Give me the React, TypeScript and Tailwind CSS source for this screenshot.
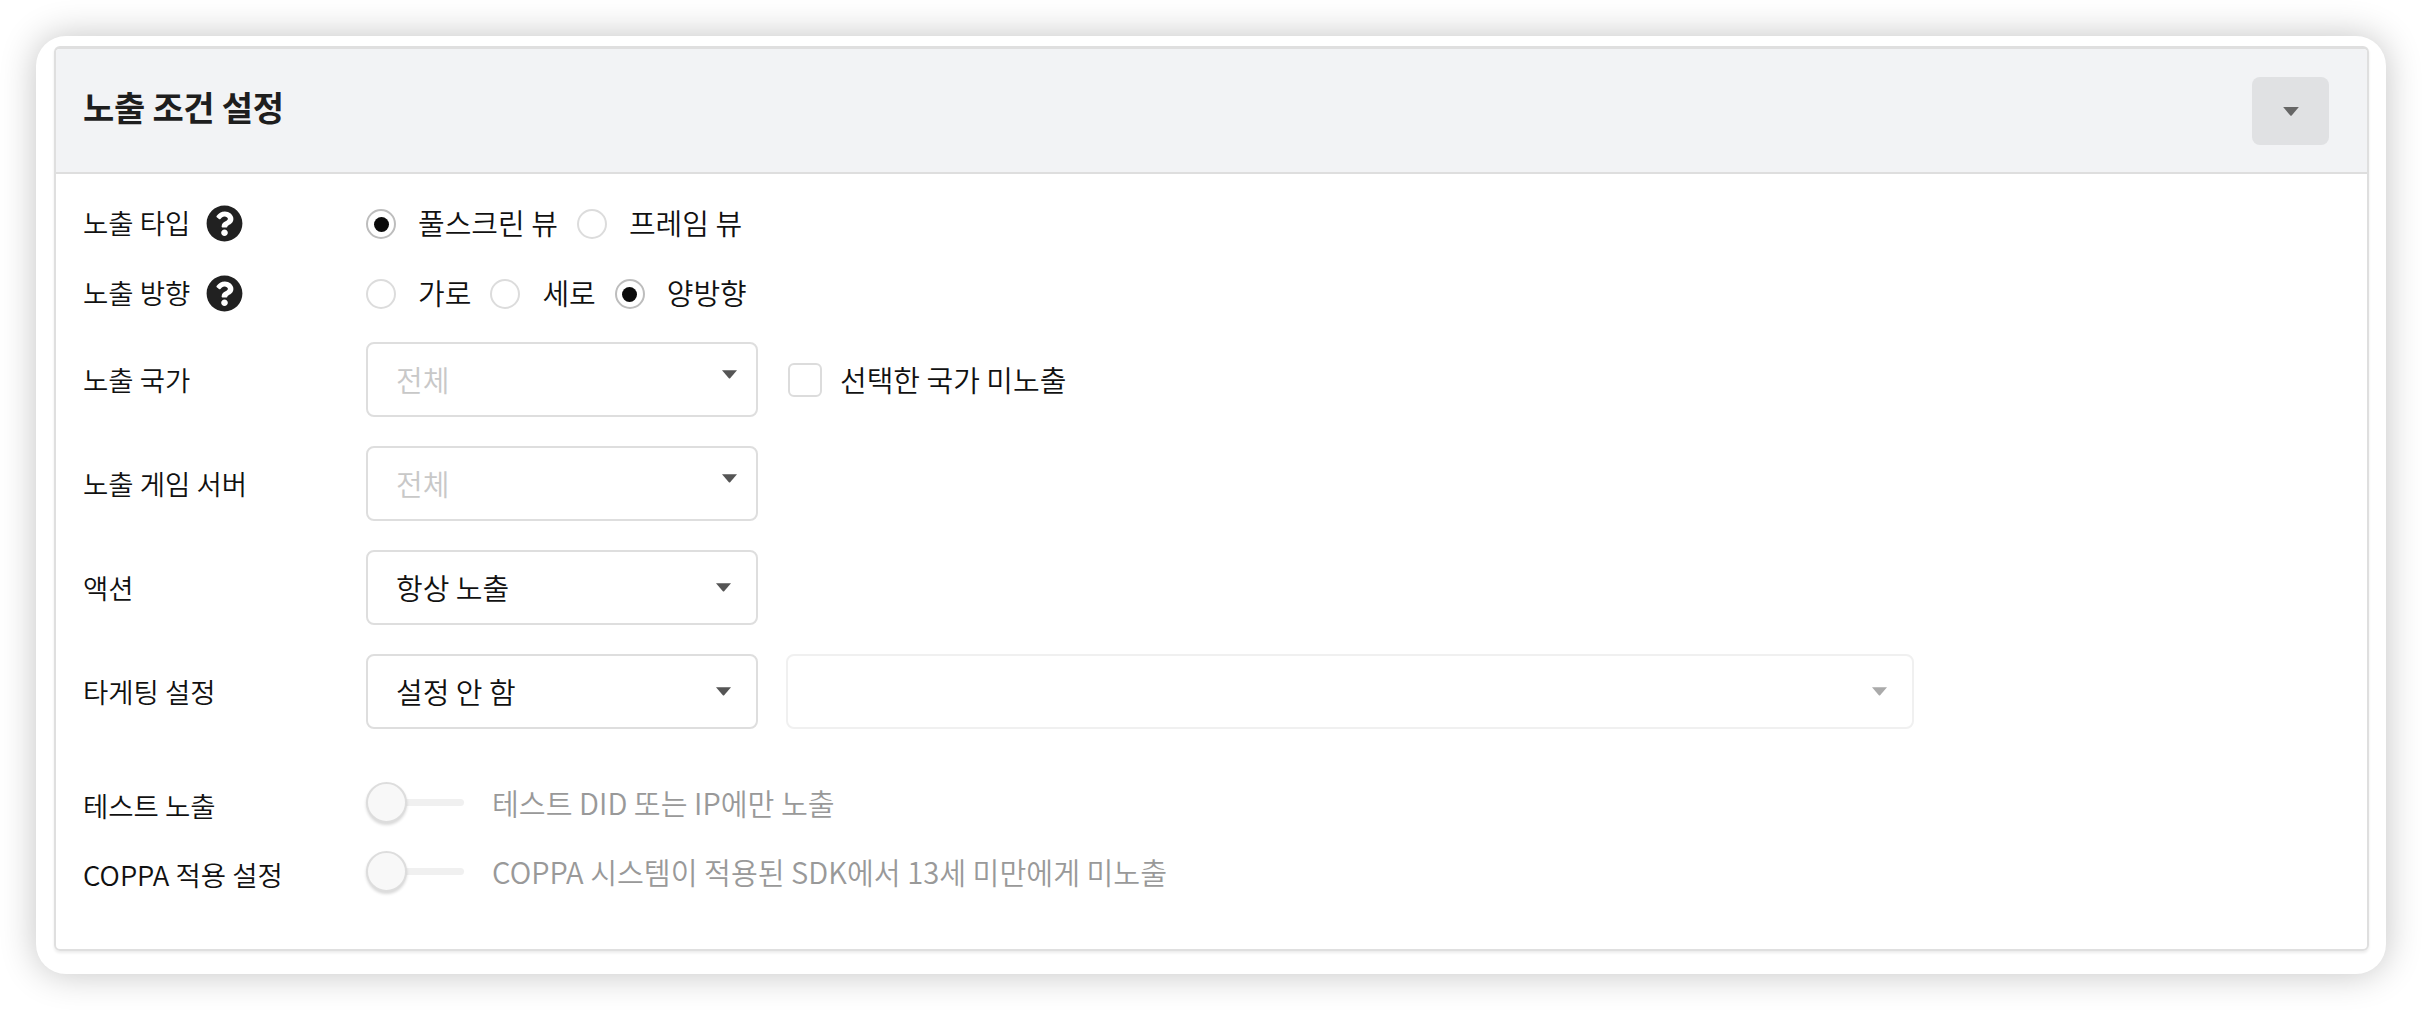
import React from 'react';
import { FaQuestionCircle } from 'react-icons/fa';

const FONT = "font-['Noto_Sans_CJK_KR','Noto_Sans',sans-serif]";

const Arrow: React.FC<{ className?: string }> = ({ className }) => (
  <svg viewBox="0 0 14 8" className={`w-[15px] h-[9px] shrink-0 ${className ?? ''}`}>
    <path d="M0 0H14L7.6 7.6Q7 8 6.4 7.6Z" fill="currentColor" />
  </svg>
);

const Radio: React.FC<{ label: string; checked?: boolean }> = ({ label, checked }) => (
  <label className="flex items-center gap-[22px] text-[29px]">
    <span className={`w-[30px] h-[30px] rounded-full border-2 flex items-center justify-center ${checked ? 'border-[#bdbdbd]' : 'border-[#dcdcdc]'}`}>
      {checked && <span className="w-[15px] h-[15px] rounded-full bg-[#0b0b0b]" />}
    </span>
    <span className="mb-[2px]">{label}</span>
  </label>
);

const Help = () => <FaQuestionCircle className="w-[37px] h-[37px] mb-[1px] text-[#212121]" />;

const Select: React.FC<{ value: string; placeholder?: boolean }> = ({ value, placeholder }) => (
  <div className="w-[392px] h-[75px] rounded-[8px] border-2 border-[#dedede] bg-white pl-[28px] pr-[25px] flex items-center justify-between text-[29px]">
    <span className={placeholder ? 'text-[#c8c8c8]' : ''}>{value}</span>
    {placeholder ? <Arrow className="text-[#555] mr-[-6px] mb-[10px]" /> : <Arrow className="text-[#555] mb-[1px]" />}
  </div>
);

const Toggle = () => (
  <div className="relative w-[98px] h-[41px] flex items-center">
    <div className="w-full h-[7px] rounded-full bg-[#f0f0f0]" />
    <div className="absolute left-0 top-0 w-[41px] h-[41px] rounded-full bg-[#f8f8f8] border-2 border-[#dddddd] shadow-[0_2px_3px_rgba(0,0,0,0.15)]" />
  </div>
);

const Label: React.FC<{ children: React.ReactNode; className?: string }> = ({ children, className }) => (
  <div className={`w-[283px] shrink-0 flex items-center gap-[16px] text-[27.5px] ${className ?? ''}`}>{children}</div>
);

export default function App() {
  return (
    <div className={`${FONT} font-[350] w-[2422px] h-[1010px] bg-white p-[36px] text-[#111] overflow-hidden`}>
      <div className="h-[938px] rounded-[30px] bg-white pt-[10px] pl-[18px] pr-[17px] pb-[23px] shadow-[0_0_36px_rgba(0,0,0,0.24)]">
        <div className="h-full rounded-[6px] border-2 border-[#dfdfdf] border-t-[3px] shadow-[0_2px_3px_rgba(0,0,0,0.08)] overflow-hidden">
          <div className="h-[125px] bg-[#f2f3f5] border-b-2 border-[#dedede] pl-[27px] pr-[38px] flex items-center justify-between">
            <h2 className="text-[34px] mb-[8px] font-bold text-[#1e1e1e] tracking-[-0.3px]">노출 조건 설정</h2>
            <button className="w-[77px] h-[68px] mt-[1px] rounded-[8px] bg-[#e0e1e3] flex items-center justify-center text-[#666]">
              <Arrow className="w-[16px]" />
            </button>
          </div>
          <div className="pl-[27px] pt-[32px] flex flex-col">
            <div className="flex items-center h-[36px]">
              <Label>
                <span className="mb-[2px]">노출 타입</span>
                <Help />
              </Label>
              <div className="flex items-center gap-[19px]">
                <Radio label="풀스크린 뷰" checked />
                <Radio label="프레임 뷰" />
              </div>
            </div>
            <div className="flex items-center h-[36px] mt-[34px]">
              <Label>
                <span className="mb-[2px]">노출 방향</span>
                <Help />
              </Label>
              <div className="flex items-center gap-[19px]">
                <Radio label="가로" />
                <Radio label="세로" />
                <Radio label="양방향" checked />
              </div>
            </div>
            <div className="flex items-center mt-[30px]">
              <Label>노출 국가</Label>
              <Select value="전체" placeholder />
              <div className="ml-[30px] w-[34px] h-[34px] rounded-[6px] border-2 border-[#dcdcdc]" />
              <span className="ml-[18px] text-[29px]">선택한 국가 미노출</span>
            </div>
            <div className="flex items-center mt-[29px]">
              <Label>노출 게임 서버</Label>
              <Select value="전체" placeholder />
            </div>
            <div className="flex items-center mt-[29px]">
              <Label>액션</Label>
              <Select value="항상 노출" />
            </div>
            <div className="flex items-center mt-[29px]">
              <Label>타게팅 설정</Label>
              <Select value="설정 안 함" />
              <div className="ml-[28px] w-[1128px] h-[75px] rounded-[8px] border-2 border-[#f0f0f0] pr-[25px] flex items-center justify-end">
                <Arrow className="text-[#aaa]" />
              </div>
            </div>
            <div className="flex items-center h-[41px] mt-[53px]">
              <Label className="pt-[6px]">테스트 노출</Label>
              <Toggle />
              <span className="ml-[28px] text-[29.2px] text-[#999]">테스트 DID 또는 IP에만 노출</span>
            </div>
            <div className="flex items-center h-[41px] mt-[28px]">
              <Label className="pt-[6px]">COPPA 적용 설정</Label>
              <Toggle />
              <span className="ml-[28px] text-[29.2px] text-[#999]">COPPA 시스템이 적용된 SDK에서 13세 미만에게 미노출</span>
            </div>
          </div>
        </div>
      </div>
    </div>
  );
}
